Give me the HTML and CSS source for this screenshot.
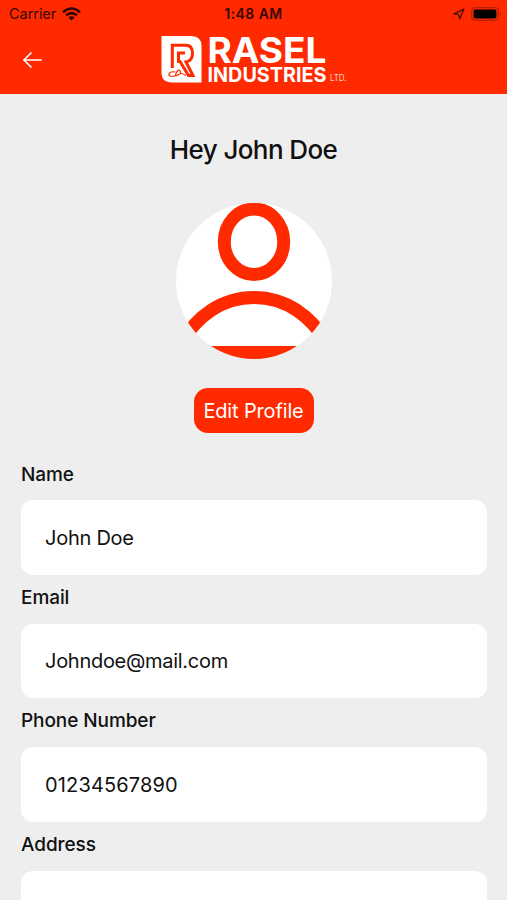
FILE: index.html
```html
<!DOCTYPE html>
<html lang="en">
<head>
<meta charset="utf-8">
<meta name="viewport" content="width=device-width, initial-scale=1">
<title>Profile</title>
<link rel="stylesheet" href="styles.css">
</head>
<body>
<header class="header">
  <div class="status">
    <div class="status-left"><span class="carrier">Carrier</span>
      <svg class="wifi" width="19" height="14" viewBox="0 0 19 14" fill="none" stroke="#300600" stroke-width="2.5"><path d="M1 5.300Q9.500-2.200 18 5.300M4 8.400Q9.500 3.800 15 8.400"/><path d="M6.400 10.500Q9.500 8 12.600 10.500L9.500 13.600Z" fill="#300600" stroke="none"/></svg>
    </div>
    <div class="time">1:48 AM</div>
    <div class="status-right">
      <svg width="12" height="12" viewBox="0 0 12 12" fill="none" stroke="#5c0e00" stroke-width="1.5" stroke-linejoin="round"><path d="M10.800 1.200 1 6 5.500 6.500 6.800 10.800Z"/></svg>
      <svg width="31" height="14" viewBox="0 0 31 14"><rect x=".7" y=".7" width="26.600" height="12.600" rx="3.500" fill="none" stroke="#b51d00" stroke-width="1.200"/><rect x="2.600" y="2.600" width="22.800" height="8.800" rx="1.800" fill="#000"/><path d="M29 4.800Q30.800 7 29 9.200Z" fill="#b51d00"/></svg>
    </div>
  </div>
  <div class="nav">
    <svg class="back" width="20" height="16" viewBox="0 0 20 16" fill="none" stroke="#fff" stroke-width="1.700" stroke-linecap="round" stroke-linejoin="round"><path d="M18 8H.900M8 1 .900 8 8 15"/></svg>
    <svg class="logo" width="188" height="50" viewBox="0 0 188 50">
      <path d="M1.500 1H31Q41.500 1 41.500 11V47.500H12Q1.500 47.500 1.500 37Z" fill="#fff"/>
      <path d="M12.300 33V10.200H26Q32.500 10.200 32.500 18.500Q32.500 26 26 27L33 40.500H28.500L20 26.500H18.500V18H25" fill="none" stroke="#ff2a00" stroke-width="3"/>
      <path d="M15.500 37Q10 36 9 39T15 41Q18 33 20 36T16 41Q22 36 26 41" fill="none" stroke="#ff2a00" stroke-width="1.200"/>
      <text class="logo-main" x="47.500" y="28" textLength="119" lengthAdjust="spacingAndGlyphs">RASEL</text>
      <text class="logo-sub" x="47.500" y="47" textLength="119" lengthAdjust="spacingAndGlyphs">INDUSTRIES</text>
      <text class="logo-ltd" x="170" y="46" textLength="16.500" lengthAdjust="spacingAndGlyphs">LTD.</text>
    </svg>
  </div>
</header>
<main class="profile">
  <h1 class="greeting">Hey John Doe</h1>
  <svg class="avatar" width="156" height="156" viewBox="0 0 156 156">
    <defs><clipPath id="round"><circle cx="78" cy="78" r="78"/></clipPath></defs>
    <g clip-path="url(#round)">
      <rect width="156" height="156" fill="#fff"/>
      <ellipse cx="78" cy="38.700" rx="29.700" ry="32.800" fill="none" stroke="#ff2a00" stroke-width="13"/>
      <path d="M3 144C20 112 47 94.500 78 94.500S136 112 153 144" fill="none" stroke="#ff2a00" stroke-width="13"/>
      <rect y="143" width="156" height="13" fill="#ff2a00"/>
    </g>
  </svg>
  <button class="edit">Edit Profile</button>
  <form class="form">
    <div class="group"><div class="label">Name</div><div class="field v-name">John Doe</div></div>
    <div class="group"><div class="label">Email</div><div class="field v-email">Johndoe@mail.com</div></div>
    <div class="group"><div class="label l-phone">Phone Number</div><div class="field v-phone">01234567890</div></div>
    <div class="group group-last"><div class="label">Address</div><div class="field field-last"></div></div>
  </form>
</main>
</body>
</html>
```
FILE: styles.css
```css
* { box-sizing: border-box; }
body {
  margin: 0;
  height: 900px;
  overflow: hidden;
  background: #eee;
  color: #111;
  font-family: Inter, "Liberation Sans", sans-serif;
}
.header { height: 94px; background: #ff2a00; }
.status {
  display: grid;
  grid-template-columns: 1fr auto 1fr;
  align-items: center;
  height: 27px;
  padding: 0 5px 0 9px;
  color: #380700;
}
.status-left { display: flex; align-items: center; gap: 6px; }
.carrier { font-size: 14.5px; letter-spacing: -0.05px; }
.time { margin-right: 4px; font-size: 14px; font-weight: 600; letter-spacing: 0.45px; }
.status-right { display: flex; justify-content: flex-end; align-items: center; gap: 6px; }
.nav { display: flex; align-items: center; height: 66px; padding-left: 23px; }
.logo { margin-left: 117px; }
.logo text { fill: #fff; font-family: Inter, sans-serif; }
.logo-main { font-size: 36px; font-weight: 700; }
.logo-sub { font-size: 20px; font-weight: 700; }
.logo .logo-ltd { font-size: 9.5px; font-weight: 300; }
.profile { display: flex; flex-direction: column; align-items: center; }
.greeting {
  margin: 39px 0 0;
  height: 34px;
  line-height: 34px;
  font-size: 26px;
  font-weight: 500;
  letter-spacing: -0.6px;
}
.avatar { display: block; margin-top: 36px; }
.edit {
  margin-top: 29px;
  width: 120px;
  height: 45px;
  padding: 0;
  border: 0;
  border-radius: 14px;
  background: #ff2a00;
  color: #fff;
  font: 400 20px Inter, sans-serif;
  letter-spacing: -0.15px;
}
.form { width: 100%; padding: 24.5px 20px 0 21px; }
.group { height: 123.5px; }
.label {
  height: 42.5px;
  padding-top: 4px;
  line-height: 26px;
  font-size: 19px;
  font-weight: 500;
  letter-spacing: -0.08px;
}
.l-phone { padding-top: 3px; }
.field {
  display: flex;
  align-items: center;
  height: 74.5px;
  padding: 1px 0 0 24px;
  border-radius: 12px;
  background: #fff;
  font-size: 20px;
}
.v-name { letter-spacing: -0.25px; }
.v-email { letter-spacing: -0.28px; }
.v-phone { letter-spacing: 0.15px; }
.group-last { height: 72px; }
.field-last { height: 29.5px; border-radius: 12px 12px 0 0; }
```
